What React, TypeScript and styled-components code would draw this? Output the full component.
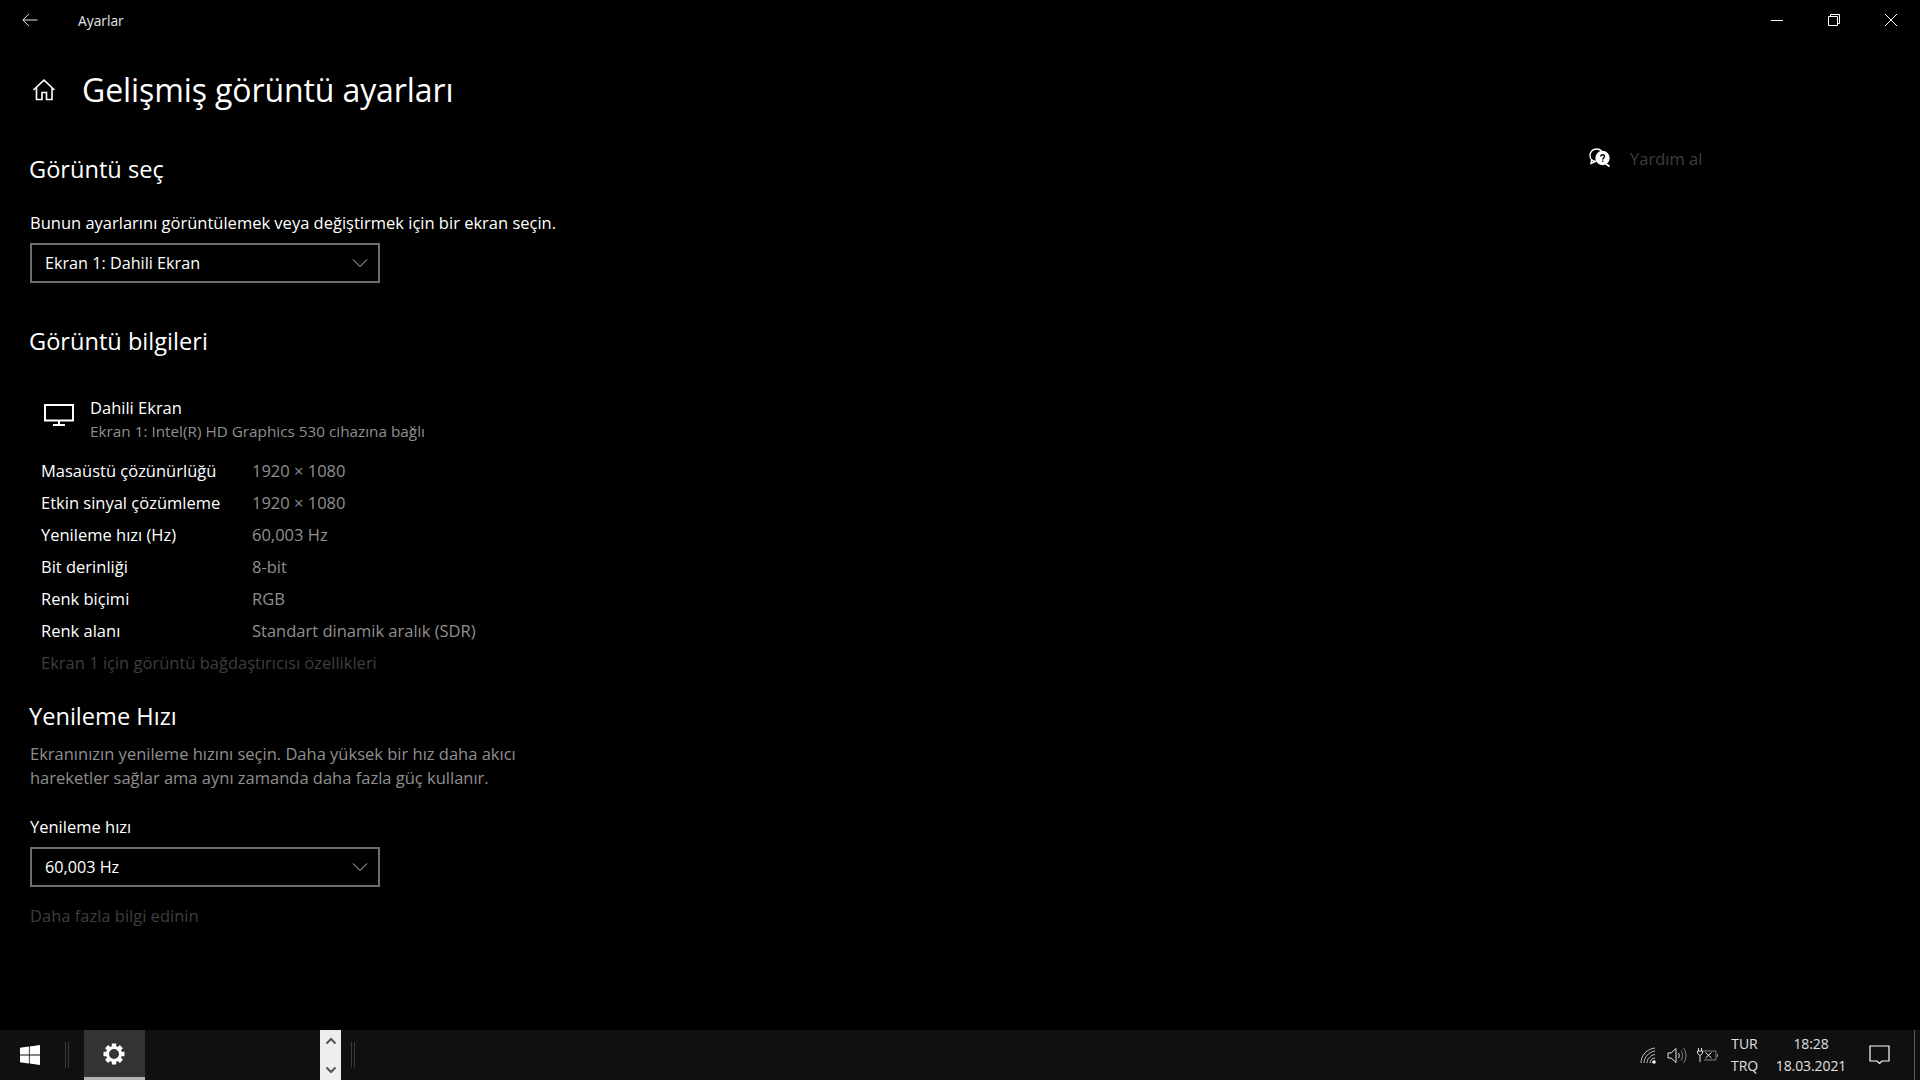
import React from "react";
import styled, { createGlobalStyle } from "styled-components";

const GlobalStyle = createGlobalStyle`
  html, body { margin: 0; padding: 0; background: #000; }
  body { font-family: "Open Sans", "Noto Sans", "Liberation Sans", sans-serif; color: #fff; }
`;

const Page = styled.div`
  width: 1920px;
  height: 1080px;
  display: flex;
  flex-direction: column;
  overflow: hidden;
`;

const TitleBar = styled.div`
  height: 40px;
  display: flex;
  align-items: center;
`;
const BackButton = styled.div`
  width: 78px;
  padding-left: 22px;
  box-sizing: border-box;
  display: flex;
  align-items: center;
`;
const AppName = styled.span`
  font-size: 13.8px;
  color: #e6e6e6;
`;
const WindowButtons = styled.div`
  margin-left: auto;
  display: flex;
  padding-right: 1px;
`;
const WindowButton = styled.div`
  width: 57px;
  display: flex;
  justify-content: center;
  align-items: center;
`;

const Main = styled.div`
  flex: 1;
  display: flex;
`;
const Content = styled.div`
  flex: 0 0 1589px;
  box-sizing: border-box;
  padding: 22px 0 0 30px;
`;
const PageHeader = styled.div`
  display: flex;
  align-items: center;
  height: 56px;
  margin-bottom: 37px;
`;
const HomeIcon = styled.div`
  width: 52px;
  padding-left: 2px;
  box-sizing: border-box;
  display: flex;
  align-items: center;
`;
const PageTitle = styled.h1`
  margin: 0;
  font-size: 32px;
  font-weight: 400;
  letter-spacing: -0.1px;
  line-height: 56px;
`;
const SectionTitle = styled.h2<{ $top?: number }>`
  margin: ${({ $top }) => $top ?? 0}px 0 0 -1px;
  font-size: 23.6px;
  font-weight: 400;
  line-height: 28px;
`;
const Label = styled.div<{ $top: number }>`
  margin-top: ${({ $top }) => $top}px;
  font-size: 16.5px;
  line-height: 20px;
`;
const Select = styled.div<{ $top: number }>`
  margin-top: ${({ $top }) => $top}px;
  width: 350px;
  height: 40px;
  box-sizing: border-box;
  border: 2px solid #6e6e6e;
  padding: 0 10px 0 13px;
  display: flex;
  align-items: center;
  justify-content: space-between;
  font-size: 16.2px;
`;
const DisplayCard = styled.div`
  margin-top: 41px;
  display: flex;
  padding-left: 14px;
`;
const DisplayIcon = styled.div`
  width: 46px;
  padding-top: 8px;
`;
const DisplayName = styled.div`
  font-size: 16.5px;
  line-height: 24px;
`;
const DisplaySub = styled.div`
  font-size: 15.3px;
  line-height: 22px;
  color: #8f8f8f;
`;
const InfoTable = styled.div`
  margin-top: 12px;
  padding-left: 11px;
`;
const InfoRow = styled.div`
  height: 32px;
  display: grid;
  grid-template-columns: 211px 1fr;
  align-items: center;
  font-size: 16.5px;
`;
const InfoValue = styled.span`
  color: #8f8f8f;
`;
const DimLink = styled.div<{ $top: number }>`
  margin-top: ${({ $top }) => $top}px;
  height: 32px;
  line-height: 32px;
  font-size: 16.5px;
  color: #3e3e3e;
`;
const Description = styled.p`
  margin: 12px 0 0;
  width: 560px;
  font-size: 16.5px;
  line-height: 24px;
  color: #8f8f8f;
`;
const Help = styled.div`
  margin-top: 106px;
  height: 24px;
  display: flex;
  align-items: center;
  gap: 19px;
  font-size: 16.5px;
  color: #3e3e3e;
`;

const Taskbar = styled.div`
  height: 50px;
  background: #101010;
  display: flex;
  align-items: stretch;
`;
const StartButton = styled.div`
  width: 60px;
  display: flex;
  align-items: center;
  justify-content: center;
`;
const Divider = styled.div<{ $gap: number; $left: number }>`
  width: 2px;
  height: 26px;
  align-self: center;
  margin-right: ${({ $gap }) => $gap}px;
  border-left: 1px solid #3a3a3a;
  border-right: 1px solid #3a3a3a;
  margin-left: ${({ $left }) => $left}px;
`;
const TaskButton = styled.div`
  width: 61px;
  box-sizing: border-box;
  background: #333;
  border-bottom: 3px solid #b3b3b3;
  display: flex;
  align-items: center;
  justify-content: center;
  padding-right: 2px;
`;
const Scroller = styled.div`
  width: 21px;
  margin-left: 175px;
  background: #eee;
  display: flex;
  flex-direction: column;
  align-items: center;
  justify-content: space-between;
  padding: 7px 0 6px;
  box-sizing: border-box;
`;
const Tray = styled.div`
  margin-left: auto;
  display: flex;
  align-items: center;
  color: #e0e0e0;
  font-size: 14px;
  letter-spacing: -0.1px;
`;
const TrayIcons = styled.div`
  display: flex;
  align-items: center;
  gap: 10px;
  margin-right: 9px;
`;
const TrayText = styled.div<{ $width: number; $left?: number }>`
  width: ${({ $width }) => $width}px;
  margin-left: ${({ $left }) => $left ?? 0}px;
  text-align: center;
  line-height: 22px;
`;
const NotifyIcon = styled.svg`
  margin-left: 15px;
`;
const EdgeLine = styled.div`
  width: 1px;
  margin-left: 24px;
  margin-right: 5px;
  align-self: stretch;
  background: #5c5c5c;
`;

const Chevron = () => (
  <svg width="16" height="10" viewBox="0 0 16 10" fill="none" stroke="#d0d0d0" strokeWidth="1">
    <path d="M1 1.5l7 7 7-7" />
  </svg>
);

const Gear = () => {
  const teeth = [0, 45, 90, 135];
  return (
    <svg width="24" height="24" viewBox="0 0 24 24" fill="none" stroke="#fff">
      <circle cx="12" cy="12" r="6.5" strokeWidth="3" />
      {teeth.map((a) => (
        <path key={a} d="M12 1.5v21" strokeWidth="4.4" transform={`rotate(${a} 12 12)`} strokeDasharray="4 13 4" />
      ))}
    </svg>
  );
};

const rows = [
  ["Masaüstü çözünürlüğü", "1920 × 1080"],
  ["Etkin sinyal çözümleme", "1920 × 1080"],
  ["Yenileme hızı (Hz)", "60,003 Hz"],
  ["Bit derinliği", "8-bit"],
  ["Renk biçimi", "RGB"],
  ["Renk alanı", "Standart dinamik aralık (SDR)"],
];

export default function App() {
  return (
    <Page>
      <GlobalStyle />
      <TitleBar>
        <BackButton>
          <svg width="16" height="14" viewBox="0 0 16 14" fill="none" stroke="#e8e8e8" strokeWidth="1">
            <path d="M15.5 7H1M7 .8L.9 7l6.1 6.2" />
          </svg>
        </BackButton>
        <AppName>Ayarlar</AppName>
        <WindowButtons>
          <WindowButton>
            <svg width="12" height="12" viewBox="0 0 12 12" stroke="#fff"><path d="M0 6.5h12" /></svg>
          </WindowButton>
          <WindowButton>
            <svg width="12" height="12" viewBox="0 0 12 12" fill="none" stroke="#fff">
              <path d="M.5 2.5h9v9h-9zM2.5 2.5V.5h9v9h-2" />
            </svg>
          </WindowButton>
          <WindowButton>
            <svg width="12" height="12" viewBox="0 0 12 12" stroke="#fff"><path d="M0 0l12 12M12 0L0 12" /></svg>
          </WindowButton>
        </WindowButtons>
      </TitleBar>
      <Main>
        <Content>
          <PageHeader>
            <HomeIcon>
              <svg width="24" height="24" viewBox="0 0 24 24" fill="none" stroke="#fff" strokeWidth="1.6">
                <path d="M1.5 12L12 2.2 22.5 12M4.5 9.5V21.5h5.5v-7h4.500v7h5.500V9.500" />
              </svg>
            </HomeIcon>
            <PageTitle>Gelişmiş görüntü ayarları</PageTitle>
          </PageHeader>

          <SectionTitle>Görüntü seç</SectionTitle>
          <Label $top={30}>Bunun ayarlarını görüntülemek veya değiştirmek için bir ekran seçin.</Label>
          <Select $top={10}>
            Ekran 1: Dahili Ekran
            <Chevron />
          </Select>

          <SectionTitle $top={44}>Görüntü bilgileri</SectionTitle>
          <DisplayCard>
            <DisplayIcon>
              <svg width="30" height="22" viewBox="0 0 30 22" fill="none" stroke="#fff" strokeWidth="2">
                <path d="M1 1h28v15.5H1zM15 17v4M9 21h12" />
              </svg>
            </DisplayIcon>
            <div>
              <DisplayName>Dahili Ekran</DisplayName>
              <DisplaySub>Ekran 1: Intel(R) HD Graphics 530 cihazına bağlı</DisplaySub>
            </div>
          </DisplayCard>
          <InfoTable>
            {rows.map(([name, value]) => (
              <InfoRow key={name}>
                <span>{name}</span>
                <InfoValue>{value}</InfoValue>
              </InfoRow>
            ))}
            <DimLink $top={1}>Ekran 1 için görüntü bağdaştırıcısı özellikleri</DimLink>
          </InfoTable>

          <SectionTitle $top={23}>Yenileme Hızı</SectionTitle>
          <Description>
            Ekranınızın yenileme hızını seçin. Daha yüksek bir hız daha akıcı
            <br />
            hareketler sağlar ama aynı zamanda daha fazla güç kullanır.
          </Description>
          <Label $top={27}>Yenileme hızı</Label>
          <Select $top={10}>
            60,003 Hz
            <Chevron />
          </Select>
          <DimLink $top={13}>Daha fazla bilgi edinin</DimLink>
        </Content>
        <Help>
          <svg width="22" height="20" viewBox="0 0 22 20" fill="none" stroke="#fff" strokeWidth="1.4">
            <path d="M7 13.5C3.5 13.5 1 11 1 7.5S3.5 1 7.5 1c2.5 0 4.5 1 5.5 3M2.5 12L2 15.5l4-2" />
            <circle cx="13.5" cy="10" r="6.5" fill="#fff" />
            <path d="M16.5 15.5l4 3" strokeWidth="1.6" />
            <path d="M11.7 8.5c0-2.4 3.8-2.4 3.8 0 0 1.5-1.8 1.4-1.8 3M13.7 12.5v1.3" stroke="#000" strokeWidth="1.4" />
          </svg>
          Yardım al
        </Help>
      </Main>
      <Taskbar>
        <StartButton>
          <svg width="20" height="20" viewBox="0 0 20 20" fill="#fff">
            <path d="M0 2.8l8.9-1.2v8H0zM9.7 1.4L20 0v9.6H9.7zM0 10.4h8.9v8L0 17.2zM9.7 10.4H20V20L9.7 18.6z" />
          </svg>
        </StartButton>
        <Divider $left={5} $gap={15} />
        <TaskButton>
          <Gear />
        </TaskButton>
        <Scroller>
          <svg width="12" height="8" viewBox="0 0 12 8" fill="none" stroke="#555" strokeWidth="2">
            <path d="M1.5 6.5L6 2l4.5 4.5" />
          </svg>
          <svg width="12" height="8" viewBox="0 0 12 8" fill="none" stroke="#555" strokeWidth="2">
            <path d="M1.5 1.5L6 6l4.5-4.5" />
          </svg>
        </Scroller>
        <Divider $left={10} $gap={0} />
        <Tray>
          <TrayIcons>
            <svg width="17" height="17" viewBox="0 0 17 17" fill="none" stroke="#bdbdbd" strokeWidth="1">
              <path d="M1 16C1 8 7 2 15 1M4 16c0-6 5-11 11-12M7 16c0-4 3.500-8 8-8.500M10 16c0-2.500 2-5 5-5" />
              <circle cx="14" cy="15" r="1.8" fill="#fff" stroke="none" />
            </svg>
            <svg width="20" height="17" viewBox="0 0 20 17" fill="none" stroke="#e0e0e0" strokeWidth="1">
              <path d="M1 6h3l5-4.500v14L4 11H1zM11.500 6c1 1.500 1 3.500 0 5" />
              <path d="M14 3.500c2 3 2 7 0 10M16.500 1c3.300 4.500 3.300 10.500 0 15" stroke="#8a8a8a" />
            </svg>
            <svg width="21" height="14" viewBox="0 0 21 14" fill="none" stroke="#e0e0e0" strokeWidth="1">
              <path d="M1.500 0v3M4.500 0v3M.5 3h5v2.500L3 7.500 .5 5.500zM3 7.500V14" />
              <path d="M6 3h13v9H7" stroke="#808080" />
              <path d="M8.500 4.500l6 5.500M14.500 4.500l-6 5.500" />
              <path d="M20.500 6v3" stroke="#808080" />
            </svg>
          </TrayIcons>
          <TrayText $width={35}>TUR<br />TRQ</TrayText>
          <TrayText $width={86} $left={6}>18:28<br />18.03.2021</TrayText>
          <NotifyIcon width="21" height="20" viewBox="0 0 21 20" fill="none" stroke="#fff" strokeWidth="1.2">
            <path d="M1 1h19v15h-7l-2.500 2.500L8 16H1z" />
          </NotifyIcon>
          <EdgeLine />
        </Tray>
      </Taskbar>
    </Page>
  );
}
